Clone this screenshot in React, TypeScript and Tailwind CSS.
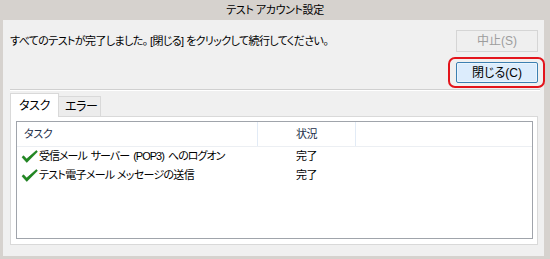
const rows = [
  { task: "受信メール サーバー (POP3) へのログオン", status: "完了", tight: true },
  { task: "テスト電子メール メッセージの送信", status: "完了", tight: false },
];

const Check = () => (
  <svg width="17" height="13" viewBox="0 0 17 13" className="shrink-0">
    <path
      d="M1 7.2 L2.6 5.8 L5.6 9 L15.4 0.6 L16.4 1.8 L5.8 12.4 Z"
      fill="#1f8a1f"
      stroke="#16701a"
      strokeWidth="0.6"
      strokeLinejoin="round"
    />
  </svg>
);

const App = () => {
  return (
    <div className="flex h-[259px] w-[550px] flex-col bg-[#d6d2ce] font-['Liberation_Sans','Noto_Sans_CJK_JP',sans-serif] text-[11px] leading-none tracking-[-0.4px] whitespace-nowrap text-black [font-feature-settings:'palt']">
      <div className="flex h-[20px] items-center justify-center">テスト アカウント設定</div>

      <div className="mb-[3px] ml-[3px] mr-[6px] flex flex-1 flex-col bg-[#f0f0f0] pl-[7px] pr-[6px]">
        <div className="mt-[10px] flex items-center justify-between">
          <span className="tracking-[-0.6px]">すべてのテストが完了しました。 [閉じる] をクリックして続行してください。</span>
          <button className="flex h-[22px] w-[82px] items-center justify-center border border-[#d5d5d5] bg-[#efefef] text-[12px] tracking-normal text-[#9d9d9d]">
            中止(S)
          </button>
        </div>

        <div className="relative mt-[10px] self-end">
          <button className="flex h-[21px] w-[82px] items-center justify-center rounded-[2px] border border-[#3c7fb1] bg-[#dcecfc] text-[12px] tracking-normal shadow-[inset_0_0_0_1px_#eaf5fe]">
            閉じる(C)
          </button>
          <div className="pointer-events-none absolute -bottom-[5px] -left-[8px] -right-[7px] -top-[5px] rounded-[7px] border-2 border-[#e3141b]" />
        </div>

        <div className="mt-[6px] mr-[-2px] border-b border-t border-b-white border-t-[#d0d0d0]" />

        <div className="mt-[2px] flex items-end">
          <div className="relative z-10 -mb-px flex h-[24px] w-[49px] items-start border border-b-0 border-[#d9d9d9] bg-white pl-[8px] pt-[6px] text-[12px]">
            タスク
          </div>
          <div className="flex h-[20px] w-[42px] items-center border border-b-0 border-l-0 border-[#d9d9d9] bg-[#ececec] pl-[6px] text-[12px]">
            エラー
          </div>
        </div>

        <div className="h-[129px] border border-[#d9d9d9] bg-white pb-[5px] pl-[5px] pr-[4px] pt-[4px]">
          <div className="h-full border border-[#a0a4ab] bg-white">
            <div className="grid h-[25px] grid-cols-[241px_98px_1fr] border-b border-[#eceff3] text-[#1e2f4a]">
              <div className="flex items-center border-r border-[#e2ebf6] pl-[7px]">タスク</div>
              <div className="flex items-center border-r border-[#e2ebf6] pl-[38px]">状況</div>
              <div />
            </div>
            {rows.map((r) => (
              <div key={r.task} className="grid h-[19px] grid-cols-[241px_98px_1fr]">
                <div className="flex items-center gap-[1px] pl-[4px]">
                  <Check />
                  <span className={r.tight ? "tracking-[-1px] [word-spacing:2px]" : "tracking-[-0.7px]"}>{r.task}</span>
                </div>
                <div className="flex items-center pl-[38px]">{r.status}</div>
                <div />
              </div>
            ))}
          </div>
        </div>
      </div>
    </div>
  );
};

export default App;
